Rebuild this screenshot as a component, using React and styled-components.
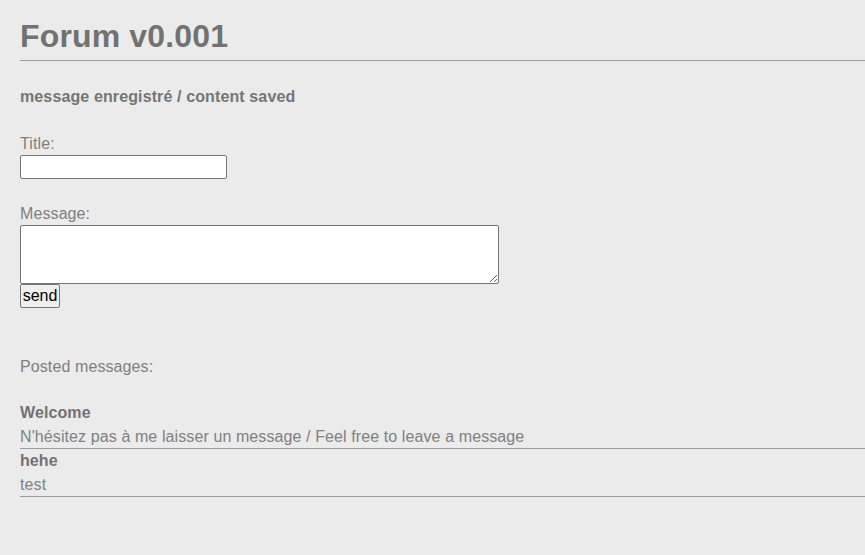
import React from "react";
import styled, { createGlobalStyle } from "styled-components";

const Global = createGlobalStyle`
  html, body { margin: 0; padding: 0; background: #ebebeb; }
  body { font-family: "Liberation Sans", Arial, sans-serif; color: #777; }
`;

const Page = styled.div`
  padding: 0 0 40px 20px;
`;

const Header = styled.header`
  padding: 20px 0 8px;
  border-bottom: 1px solid #9a9a9a;
`;

const Title = styled.h1`
  margin: 0;
  font-size: 32px;
  line-height: 32px;
  font-weight: bold;
  letter-spacing: 0.15px;
  color: #727272;
`;

const Notice = styled.p`
  margin: 24px 0 0;
  font-size: 16px;
  line-height: 24px;
  font-weight: bold;
  letter-spacing: 0.12px;
  color: #757575;
`;

const Form = styled.form`
  display: flex;
  flex-direction: column;
  align-items: flex-start;
`;

const Label = styled.label`
  display: block;
  font-size: 16px;
  line-height: 18px;
  letter-spacing: 0.1px;
  color: #808080;
  margin-top: ${(p) => p.$top}px;
`;

const TextInput = styled.input`
  box-sizing: border-box;
  width: 207px;
  height: 24px;
  margin: 2px 0 0;
  border: 1px solid #767676;
  border-radius: 2px;
  background: #fff;
  padding: 1px 2px;
`;

const TextArea = styled.textarea`
  box-sizing: border-box;
  width: 479px;
  height: 59px;
  margin: 2px 0 0;
  border: 1px solid #767676;
  border-radius: 2px;
  background: #fff;
  padding: 2px;
  resize: both;
`;

const Button = styled.button`
  box-sizing: border-box;
  height: 24px;
  width: 40px;
  margin: 0;
  padding: 0 1px;
  border: 1px solid #767676;
  border-radius: 2px;
  background: #efefef;
  color: #000;
  font-family: "Liberation Sans", Arial, sans-serif;
  font-size: 16px;
  line-height: 20px;
`;

const Section = styled.p`
  margin: 47px 0 0;
  font-size: 16px;
  line-height: 24px;
  letter-spacing: 0.1px;
  color: #808080;
`;

const Posts = styled.div`
  margin-top: 22px;
`;

const Post = styled.div`
  border-bottom: 1px solid #9a9a9a;
`;

const PostTitle = styled.div`
  font-size: 16px;
  line-height: 24px;
  font-weight: bold;
  letter-spacing: 0.1px;
  color: #727272;
`;

const PostBody = styled.div`
  font-size: 16px;
  line-height: 23px;
  letter-spacing: 0.1px;
  color: #808080;
`;

const posts = [
  { title: "Welcome", body: "N'hésitez pas à me laisser un message / Feel free to leave a message" },
  { title: "hehe", body: "test" },
];

export default function App() {
  return (
    <>
      <Global />
      <Page>
        <Header>
          <Title>Forum v0.001</Title>
        </Header>
        <Notice>message enregistré / content saved</Notice>
        <Form onSubmit={(e) => e.preventDefault()}>
          <Label $top={26} htmlFor="t">Title:</Label>
          <TextInput id="t" type="text" />
          <Label $top={26} htmlFor="m">Message:</Label>
          <TextArea id="m" />
          <Button type="submit">send</Button>
        </Form>
        <Section>Posted messages:</Section>
        <Posts>
          {posts.map((p) => (
            <Post key={p.title}>
              <PostTitle>{p.title}</PostTitle>
              <PostBody>{p.body}</PostBody>
            </Post>
          ))}
        </Posts>
      </Page>
    </>
  );
}
